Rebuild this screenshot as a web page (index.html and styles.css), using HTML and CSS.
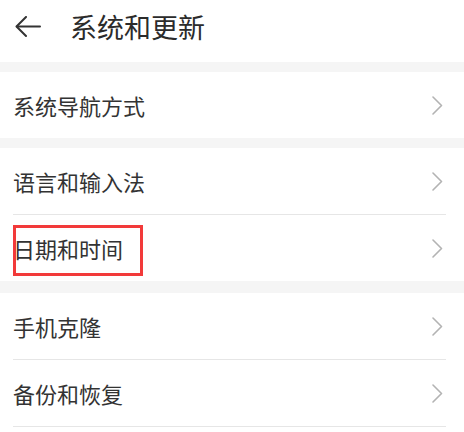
FILE: index.html
```html
<!DOCTYPE html>
<html lang="zh-CN">
<head>
<meta charset="utf-8">
<link rel="stylesheet" href="styles.css">
</head>
<body>
<div class="page">
  <header class="header">
    <svg class="back" width="26" height="22" viewBox="0 0 26 22" aria-hidden="true">
      <path d="M25 10.5 H2" />
      <path d="M11 1 L1.5 10.5 L11 20" />
    </svg>
    <h1 class="title">系统和更新</h1>
  </header>

  <div class="gap gap-a"></div>
  <div class="group">
    <div class="row"><span class="label">系统导航方式</span><svg class="chev" width="11" height="19" viewBox="0 0 11 19"><path d="M1 1 L9.5 9.5 L1 18"/></svg></div>
  </div>

  <div class="gap gap-b"></div>
  <div class="group">
    <div class="row sep"><span class="label">语言和输入法</span><svg class="chev" width="11" height="19" viewBox="0 0 11 19"><path d="M1 1 L9.5 9.5 L1 18"/></svg></div>
    <div class="row marked"><span class="label">日期和时间</span><svg class="chev" width="11" height="19" viewBox="0 0 11 19"><path d="M1 1 L9.5 9.5 L1 18"/></svg><span class="highlight"></span></div>
  </div>

  <div class="gap gap-c"></div>
  <div class="group">
    <div class="row sep"><span class="label">手机克隆</span><svg class="chev" width="11" height="19" viewBox="0 0 11 19"><path d="M1 1 L9.5 9.5 L1 18"/></svg></div>
    <div class="row sep"><span class="label">备份和恢复</span><svg class="chev" width="11" height="19" viewBox="0 0 11 19"><path d="M1 1 L9.5 9.5 L1 18"/></svg></div>
  </div>
</div>
</body>
</html>
```

FILE: styles.css
```css
html, body {
  margin: 0;
  padding: 0;
  background: #ffffff;
}

body {
  font-family: "Noto Sans CJK SC", "Noto Sans", sans-serif;
  color: #333333;
  overflow: hidden;
}

.page {
  width: 464px;
  height: 432px;
  overflow: hidden;
  background: #ffffff;
}

.header {
  height: 62px;
  box-sizing: border-box;
  padding: 0 0 9px 15px;
  display: flex;
  align-items: center;
}

.back {
  fill: none;
  stroke: #333333;
  stroke-width: 2;
  stroke-linecap: round;
  stroke-linejoin: round;
  margin-right: 29px;
}

.title {
  margin: 0;
  font-size: 27px;
  font-weight: 400;
  color: #2b2b2b;
  line-height: 1;
}

.gap {
  background: #f5f5f5;
}
.gap-a { height: 10px; }
.gap-b { height: 10px; }
.gap-c { height: 12px; }

.group {
  background: #ffffff;
}

.row {
  position: relative;
  height: 66px;
  margin: 0 18px 0 13px;
  display: flex;
  align-items: center;
  justify-content: space-between;
}

.row.sep {
  border-bottom: 1px solid #e6e6e6;
}

.label {
  font-size: 22px;
  line-height: 1;
  color: #333333;
}

.chev {
  fill: none;
  stroke: #b3b3b3;
  stroke-width: 1.6;
  stroke-linecap: round;
  stroke-linejoin: round;
  margin-right: 3px;
}

.highlight {
  position: absolute;
  left: 0;
  top: 10px;
  width: 130px;
  height: 51px;
  box-sizing: border-box;
  border: 3px solid #f23a3a;
}
```
